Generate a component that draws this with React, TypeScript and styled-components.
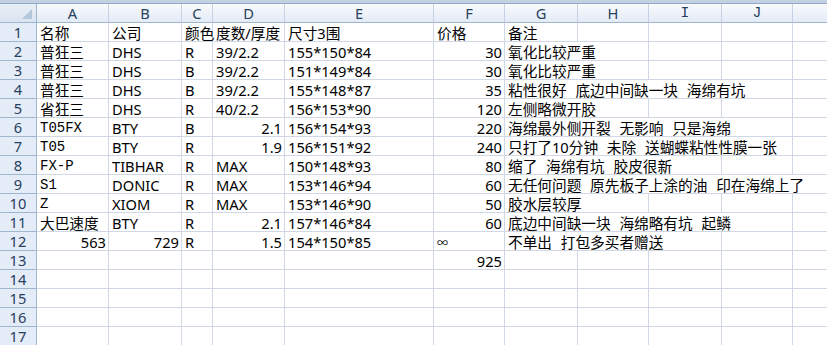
import React from 'react';
import styled, { createGlobalStyle } from 'styled-components';

interface Cell {
  v: string;
  right?: boolean;
  mono?: boolean;
  small?: boolean;
  span?: number;
  clip?: boolean;
}

type Row = Partial<Record<string, Cell>>;

const COLS = ['A', 'B', 'C', 'D', 'E', 'F', 'G', 'H', 'I', 'J', 'K'];
const WIDTHS = [37, 72, 73, 31, 72, 149, 71, 73, 71, 73, 71, 140];
const ROW_COUNT = 17;

const t = (v: string, span?: number): Cell => ({ v, span });
const n = (v: string): Cell => ({ v, right: true });
const m = (v: string): Cell => ({ v, mono: true });

const rows: Row[] = [
  { A: t('名称'), B: t('公司'), C: t('颜色'), D: { v: '度数/厚度', clip: true }, E: t('尺寸3围'), F: t('价格'), G: t('备注') },
  { A: t('普狂三'), B: t('DHS'), C: t('R'), D: t('39/2.2'), E: t('155*150*84'), F: n('30'), G: t('氧化比较严重', 2) },
  { A: t('普狂三'), B: t('DHS'), C: t('B'), D: t('39/2.2'), E: t('151*149*84'), F: n('30'), G: t('氧化比较严重', 2) },
  { A: t('普狂三'), B: t('DHS'), C: t('B'), D: t('39/2.2'), E: t('155*148*87'), F: n('35'), G: t('粘性很好 底边中间缺一块 海绵有坑', 4) },
  { A: t('省狂三'), B: t('DHS'), C: t('R'), D: t('40/2.2'), E: t('156*153*90'), F: n('120'), G: t('左侧略微开胶', 2) },
  { A: m('T05FX'), B: t('BTY'), C: t('B'), D: n('2.1'), E: t('156*154*93'), F: n('220'), G: t('海绵最外侧开裂 无影响 只是海绵', 4) },
  { A: m('T05'), B: t('BTY'), C: t('R'), D: n('1.9'), E: t('156*151*92'), F: n('240'), G: t('只打了10分钟 未除 送蝴蝶粘性性膜一张', 4) },
  { A: m('FX-P'), B: t('TIBHAR'), C: t('R'), D: t('MAX'), E: t('150*148*93'), F: n('80'), G: t('缩了 海绵有坑 胶皮很新', 3) },
  { A: m('S1'), B: t('DONIC'), C: t('R'), D: t('MAX'), E: t('153*146*94'), F: n('60'), G: t('无任何问题 原先板子上涂的油 印在海绵上了', 5) },
  { A: m('Z'), B: t('XIOM'), C: t('R'), D: t('MAX'), E: t('153*146*90'), F: n('50'), G: t('胶水层较厚', 2) },
  { A: t('大巴速度'), B: t('BTY'), C: t('R'), D: n('2.1'), E: t('157*146*84'), F: n('60'), G: t('底边中间缺一块 海绵略有坑 起鳞', 4) },
  { A: n('563'), B: n('729'), C: t('R'), D: n('1.5'), E: t('154*150*85'), F: { v: '∞', small: true }, G: t('不单出 打包多买者赠送', 3) },
  { F: n('925') },
];

const GlobalStyle = createGlobalStyle`
  html, body {
    margin: 0;
    padding: 0;
    background: #ffffff;
    overflow: hidden;
  }
`;

const Sheet = styled.div`
  width: 827px;
  height: 345px;
  overflow: hidden;
  background: #ffffff;
  font-family: "Noto Sans", "Noto Sans CJK SC", sans-serif;
  font-size: 14.67px;
  color: #000000;
`;

const TopStrip = styled.div`
  height: 3px;
  background: #c3d1e3;
  border-bottom: 1px solid #8fa8c6;
`;

const Grid = styled.div`
  display: grid;
  grid-template-columns: ${WIDTHS.map((w) => `${w}px`).join(' ')};
  grid-template-rows: 19px;
  grid-auto-rows: 19px;
`;

const Corner = styled.div`
  position: relative;
  box-sizing: border-box;
  background: linear-gradient(#e9eff7, #dae4f1);
  border-right: 1px solid #9eb6ce;
  border-bottom: 1px solid #9eb6ce;

  &::after {
    content: '';
    position: absolute;
    right: 4px;
    bottom: 3px;
    width: 0;
    height: 0;
    border-left: 10px solid transparent;
    border-bottom: 10px solid #b4c6dc;
  }
`;

const ColHead = styled.div<{ $serif?: boolean }>`
  box-sizing: border-box;
  display: flex;
  align-items: center;
  justify-content: center;
  background: linear-gradient(#f8fafd, #e4ebf5);
  border-right: 1px solid #c5d2e3;
  border-bottom: 1px solid #9eb6ce;
  color: #27405e;
  font-family: ${(p) => (p.$serif ? '"Liberation Mono", monospace' : '"Noto Sans", sans-serif')};
  font-size: 14.67px;
  line-height: 1;
  padding-top: 1px;
`;

const RowHead = styled.div`
  box-sizing: border-box;
  display: flex;
  align-items: center;
  justify-content: center;
  background: #e4ecf7;
  border-right: 1px solid #9eb6ce;
  border-bottom: 1px solid #9eb6ce;
  color: #27405e;
  font-size: 14.67px;
  line-height: 1;
  padding-top: 1px;
`;

const DataCell = styled.div<{ $right?: boolean; $mono?: boolean; $small?: boolean; $span?: number; $clip?: boolean }>`
  box-sizing: border-box;
  grid-column: span ${(p) => p.$span ?? 1};
  display: flex;
  align-items: flex-end;
  justify-content: ${(p) => (p.$right ? 'flex-end' : 'flex-start')};
  min-width: 0;
  padding: 0 2px 0 3px;
  border-right: 1px solid #d0d7e5;
  border-bottom: 1px solid #d0d7e5;
  white-space: pre;
  word-spacing: 5px;
  line-height: 15px;
  overflow: ${(p) => (p.$clip ? 'hidden' : 'visible')};
  font-family: ${(p) =>
    p.$mono ? '"Liberation Mono", "Noto Sans CJK SC", monospace' : '"Noto Sans", "Noto Sans CJK SC", sans-serif'};
  font-size: ${(p) => (p.$mono ? '14px' : p.$small ? '11px' : '14.67px')};
`;

const renderRow = (row: Row, idx: number) => {
  const cells: React.ReactNode[] = [<RowHead key="h">{idx + 1}</RowHead>];
  let c = 0;
  while (c < COLS.length) {
    const cell = row[COLS[c]];
    const span = cell?.span ?? 1;
    cells.push(
      <DataCell
        key={COLS[c]}
        $right={cell?.right}
        $mono={cell?.mono}
        $small={cell?.small}
        $span={span}
        $clip={cell?.clip}
      >
        {cell?.v ?? ''}
      </DataCell>
    );
    c += span;
  }
  return cells;
};

const App = () => {
  const allRows: Row[] = Array.from({ length: ROW_COUNT }, (_, i) => rows[i] ?? {});
  return (
    <Sheet>
      <GlobalStyle />
      <TopStrip />
      <Grid>
        <Corner />
        {COLS.map((col) => (
          <ColHead key={col} $serif={col === 'I' || col === 'J'}>
            {col}
          </ColHead>
        ))}
        {allRows.map((row, i) => renderRow(row, i))}
      </Grid>
    </Sheet>
  );
};

export default App;
